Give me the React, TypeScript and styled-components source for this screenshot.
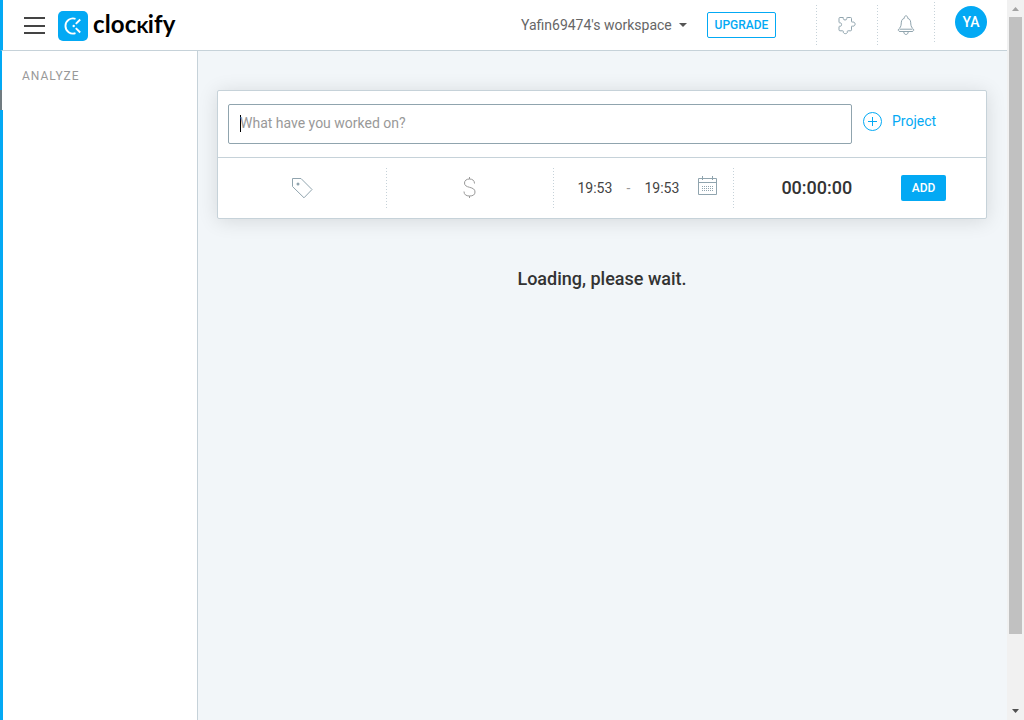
import React from "react";
import styled, { createGlobalStyle } from "styled-components";

const GlobalStyle = createGlobalStyle`
  * { box-sizing: border-box; }
  html, body { margin: 0; height: 720px; overflow: hidden; }
  body { font-family: Roboto, "Liberation Sans", sans-serif; font-size: 14px; color: #333; background: #f2f6f8; }
`;

const Page = styled.div`display: flex; width: 1024px; height: 720px; background: #f2f6f9;`;
const Content = styled.div`display: flex; flex-direction: column; width: 1007px; height: 720px;`;
const Header = styled.header`
  display: flex; height: 51px; flex: none; background: #fff;
  border-left: 3px solid #03a9f4; border-bottom: 1px solid #c6d2d9;
`;
const MenuButton = styled.div`
  display: flex; flex-direction: column; justify-content: space-between;
  width: 21px; height: 17px; margin: 17px 0 0 21px;
`;
const MenuLine = styled.i`display: block; height: 2px; background: #444;`;
const LogoMark = styled.svg`display: block; width: 30px; height: 30px; margin: 11px 0 0 13px;`;
const LogoText = styled.div`
  width: 90px; margin: 10px 0 0 5px; line-height: 28px; white-space: nowrap;
  font-family: Lato, sans-serif; font-weight: 700; font-size: 24px; letter-spacing: 0.15px; color: #000;
`;
const SmallCap = styled.span`font-variant-caps: small-caps; font-weight: 900; letter-spacing: -0.5px;`;
const Workspace = styled.div`
  display: flex; align-items: center; height: 50px; margin-left: 338px; width: 186px;
  color: #666; white-space: nowrap;
`;
const Caret = styled.i`
  margin-left: 7px; border: 4px solid transparent; border-top-color: #555; border-bottom: 0;
`;
const Upgrade = styled.div`
  width: 69px; height: 26px; margin-top: 12px; border: 1px solid #03a9f4; border-radius: 2px;
  color: #03a9f4; font-size: 12px; font-weight: 500; line-height: 24px; text-align: center;
`;
const DottedRule = styled.i<{ $top: number; $left?: number }>`
  flex: none; width: 1px; height: 40px; margin: ${p => p.$top}px 0 0 ${p => p.$left ?? 0}px;
  background: repeating-linear-gradient(to bottom, #c6d2d9 0 1px, transparent 1px 3px);
`;
const HeaderIcon = styled.div<{ $width: number }>`
  display: flex; justify-content: center; align-items: center; width: ${p => p.$width}px; height: 49px;
`;
const Avatar = styled.div`
  width: 32px; height: 32px; margin: 6px 0 0 20px; border-radius: 50%; background: #03a9f4;
  color: #fff; font-size: 14px; font-weight: 500; line-height: 32px; text-align: center;
`;
const Body = styled.div`display: flex; flex: 1;`;
const Sidebar = styled.aside`
  display: flex; width: 198px; background: #fff; border-right: 1px solid #c6d2d9;
`;
const Rail = styled.div`display: flex; flex-direction: column; width: 3px;`;
const RailPart = styled.i<{ $height?: number; $width: number; $color: string }>`
  display: block; width: ${p => p.$width}px; background: ${p => p.$color};
  ${p => (p.$height ? `height: ${p.$height}px;` : "flex: 1;")}
`;
const SidebarTitle = styled.div`
  margin: 17px 0 0 19px; color: #999; font-size: 12px; line-height: 16px; letter-spacing: 1px;
`;
const Main = styled.main`flex: 1; padding: 39px 20px 0 19px;`;
const Card = styled.section`
  width: 770px; height: 129px; background: #fff; border: 1px solid #c6d2d9; border-radius: 2px;
  box-shadow: 0 2px 20px rgba(0, 0, 0, 0.12);
`;
const EntryRow = styled.div`
  display: flex; height: 67px; padding: 13px 0 0 10px; border-bottom: 1px solid #c6d2d9;
`;
const DescriptionField = styled.div`
  display: flex; align-items: center; width: 624px; height: 40px; padding: 0 0 2px 11px;
  border: 1px solid #90a4ae; border-radius: 2px; color: #999;
`;
const TextCursor = styled.i`width: 1px; height: 17px; margin-right: -1px; background: #000;`;
const ProjectLink = styled.div`
  display: flex; align-items: center; gap: 10px; height: 20px; margin: 7px 0 0 11px;
  color: #03a9f4; line-height: 20px;
`;
const DetailsRow = styled.div`display: flex; height: 60px;`;
const Cell = styled.div<{ $width: number }>`
  display: flex; align-items: center; justify-content: center; width: ${p => p.$width}px; height: 60px;
`;
const TimeRange = styled.div`
  display: flex; width: 179px; height: 60px; padding-left: 23.4px; line-height: 60px; color: #444;
`;
const Time = styled.span`width: 36px;`;
const Dash = styled.span`width: 31px; padding-left: 13px; color: #999;`;
const CalendarIcon = styled.svg`display: block; width: 20px; height: 20px; margin: 18px 0 0 17.6px;`;
const Duration = styled.div`
  width: 72px; margin-left: 47.4px; font-size: 18px; font-weight: 500; line-height: 60px;
`;
const AddButton = styled.div`
  width: 45px; height: 26px; margin: 17px 0 0 47.6px; border-radius: 2px; background: #03a9f4;
  color: #fff; font-size: 12px; font-weight: 500; line-height: 26px; text-align: center;
`;
const Loading = styled.div`
  width: 770px; margin-top: 48px; font-size: 18px; font-weight: 500; line-height: 24px; text-align: center;
`;
const Scrollbar = styled.div`
  display: flex; flex-direction: column; align-items: center; width: 17px; height: 720px; background: #f1f1f1;
`;
const ScrollArrow = styled.div`display: flex; align-items: center; justify-content: center; height: 17px;`;
const Thumb = styled.div`width: 13px; height: 617px; margin-bottom: 68px; background: #c1c1c1;`;

export default function App() {
  return (
    <Page>
      <GlobalStyle />
      <Content>
        <Header>
          <MenuButton><MenuLine /><MenuLine /><MenuLine /></MenuButton>
          <LogoMark viewBox="0 0 30 30" fill="none">
            <rect width="30" height="30" rx="5" fill="#03a9f4" />
            <path d="M17.5 7.8A7.6 7.6 0 1 0 17.5 22.2" stroke="#fff" strokeWidth="1.9" />
            <path d="M17.8 12.9L22.2 8.5M17.8 17.1L22.2 21.5" stroke="#fff" strokeWidth="1.9" />
            <circle cx="15.7" cy="15" r="1.2" fill="#fff" />
          </LogoMark>
          <LogoText>cloc<SmallCap>k</SmallCap>ify</LogoText>
          <Workspace>Yafin69474's workspace<Caret /></Workspace>
          <Upgrade>UPGRADE</Upgrade>
          <DottedRule $top={5} $left={40} />
          <HeaderIcon $width={60}>
            <svg width="20" height="20" viewBox="0 0 20 20" fill="none" stroke="#90a4ae">
              <path d="M3 2.5H6C6.8 2.5 6.3 3.2 6.3 3.8C6.3 5.4 9.8 5.4 9.8 3.8C9.8 3.2 9.4 2.5 10.2 2.5H13.5Q14.5 2.5 14.5 3.5V6.4C14.5 7.5 15.2 7 16 7C18.8 7 18.8 11.2 16 11.2C15.2 11.2 14.5 10.7 14.5 11.7V14.8Q14.5 15.8 13.5 15.8H11.2C10 15.8 10.4 16.4 10.4 17C10.4 19.2 6.3 19.2 6.3 17C6.3 16.4 6.7 15.8 5.5 15.8H3Q2 15.8 2 14.8V12C2 11 2.7 11.3 3.3 11.3C5 11.3 5 7.8 3.3 7.8C2.7 7.8 2 8 2 7V3.5Q2 2.5 3 2.5Z" />
            </svg>
          </HeaderIcon>
          <DottedRule $top={5} />
          <HeaderIcon $width={56}>
            <svg width="18" height="22" viewBox="0 0 18 22" fill="none" stroke="#90a4ae">
              <path d="M7.3 4.3C7 1 11 1 10.7 4.3C13.5 5 13.7 7.5 13.8 10C14 12.5 15 14 16.3 15C17.2 16 16.5 17.5 15 17.5H3C1.5 17.5 .8 16 1.7 15C3 14 4 12.5 4.2 10C4.3 7.5 4.5 5 7.3 4.3ZM2.5 15.2H15.5M6.8 18C7 21.3 11 21.3 11.2 18" />
            </svg>
          </HeaderIcon>
          <DottedRule $top={2} />
          <Avatar>YA</Avatar>
        </Header>
        <Body>
          <Sidebar>
            <Rail>
              <RailPart $height={39} $width={2} $color="#03a9f4" />
              <RailPart $height={20} $width={2} $color="#707b80" />
              <RailPart $width={3} $color="#03a9f4" />
            </Rail>
            <SidebarTitle>ANALYZE</SidebarTitle>
          </Sidebar>
          <Main>
            <Card>
              <EntryRow>
                <DescriptionField><TextCursor />What have you worked on?</DescriptionField>
                <ProjectLink>
                  <svg width="19" height="19" viewBox="0 0 19 19" fill="none" stroke="#03a9f4">
                    <circle cx="9.5" cy="9.5" r="9" /><path d="M5 9.5H14M9.5 5V14" />
                  </svg>
                  Project
                </ProjectLink>
              </EntryRow>
              <DetailsRow>
                <Cell $width={168}>
                  <svg width="21" height="21" viewBox="0 0 21 21" fill="none" stroke="#90a4ae">
                    <path d="M.5 .5H9L20 11.5L12 19.8L.5 8.5Z" /><circle cx="6" cy="6" r="1.5" fill="#90a4ae" stroke="none" />
                  </svg>
                </Cell>
                <DottedRule $top={10} />
                <Cell $width={166}>
                  <svg width="15" height="22" viewBox="0 0 15 22" fill="none" stroke="#999">
                    <path d="M6.5 0V2M6.5 19V21M11.5 6.5C11.5 3.5 9.5 2 6.5 2C3.5 2 1.5 3.5 1.5 6C1.5 8.7 3.5 9.5 6.5 10.3C10 11.2 12 12.2 12 15C12 17.8 10 19 6.5 19C3 19 1 17.5 1 14.5" />
                  </svg>
                </Cell>
                <DottedRule $top={10} />
                <TimeRange>
                  <Time>19:53</Time><Dash>-</Dash><Time>19:53</Time>
                  <CalendarIcon viewBox="0 0 20 20" fill="none" stroke="#90a4ae">
                    <path d="M.5 2.5H18.5V18.5H.5ZM.5 6.5H18.5M4.5 0V4M14.5 0V4" />
                    <path d="M4 10.5H15M4 12.5H15M4 14.5H15" strokeDasharray="1 1" />
                  </CalendarIcon>
                </TimeRange>
                <DottedRule $top={10} />
                <Duration>00:00:00</Duration>
                <AddButton>ADD</AddButton>
              </DetailsRow>
            </Card>
            <Loading>Loading, please wait.</Loading>
          </Main>
        </Body>
      </Content>
      <Scrollbar>
        <ScrollArrow><svg width="7" height="4"><path d="M0 4L3.5 0L7 4Z" fill="#a3a3a3" /></svg></ScrollArrow>
        <Thumb />
        <ScrollArrow><svg width="7" height="4"><path d="M0 0L3.5 4L7 0Z" fill="#505050" /></svg></ScrollArrow>
      </Scrollbar>
    </Page>
  );
}
